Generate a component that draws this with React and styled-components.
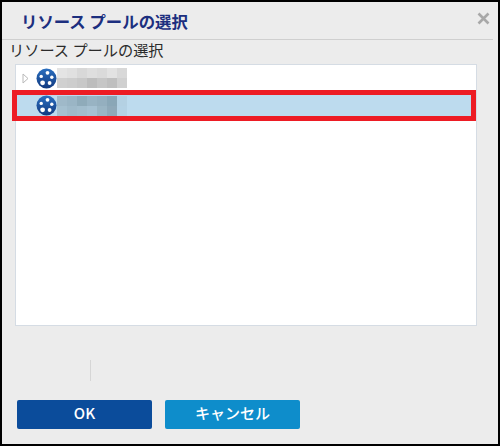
import React from 'react';
import styled, { createGlobalStyle } from 'styled-components';

const GlobalStyle = createGlobalStyle`
  html, body {
    margin: 0;
    padding: 0;
    background: #000;
  }

  body {
    font-family: "Noto Sans CJK JP", "Liberation Sans", sans-serif;
  }
`;

const Frame = styled.div`
  box-sizing: border-box;
  width: 500px;
  height: 446px;
  border: 2px solid #000;
  background: #ececec;
  display: flex;
  flex-direction: column;
`;

const TitleBar = styled.header`
  box-sizing: border-box;
  height: 38px;
  margin-right: 5px;
  padding: 0 3px 0 19px;
  display: flex;
  align-items: center;
  justify-content: space-between;
  border-bottom: 1px solid #cfcfcf;
`;

const Title = styled.h1`
  margin: 0;
  font-size: 16.4px;
  line-height: 20px;
  font-weight: 700;
  color: #1c2f7f;
`;

const CloseIcon = styled.svg`
  width: 13px;
  height: 13px;
  margin-top: -4px;
`;

const Body = styled.main`
  flex: 1;
  display: flex;
  flex-direction: column;
  padding: 0 20px 0 13px;
`;

const FieldLabel = styled.div`
  margin-left: -6px;
  font-size: 15.2px;
  line-height: 18px;
  color: #2b2b2b;
`;

const TreeBox = styled.div`
  box-sizing: border-box;
  width: 462px;
  height: 262px;
  margin-top: 6px;
  padding-top: 1px;
  background: #fff;
  border: 1px solid #d5dce4;
  display: flex;
  flex-direction: column;
`;

const TreeRow = styled.div`
  position: relative;
  display: flex;
  align-items: center;
  height: ${({ $selected }) => ($selected ? '21px' : '24px')};
  margin-top: ${({ $selected }) => ($selected ? '5px' : '0')};
  background: ${({ $selected }) => ($selected ? '#bddbee' : 'transparent')};
`;

const Expander = styled.svg`
  flex: none;
  width: 7px;
  height: 11px;
  margin-left: 6px;
  visibility: ${({ $hidden }) => ($hidden ? 'hidden' : 'visible')};
`;

const PoolIcon = styled.svg`
  flex: none;
  width: 21px;
  height: 21px;
  margin-left: 7px;
`;

const Mosaic = styled.div`
  display: grid;
  grid-template-columns: repeat(7, 10px);
  grid-auto-rows: 10px;
`;

const MosaicCell = styled.span`
  background: ${({ $tone }) => $tone};
`;

const Highlight = styled.div`
  position: absolute;
  top: -5px;
  bottom: -5px;
  left: -4px;
  right: 0;
  border: 5px solid #ed1c24;
  pointer-events: none;
`;

const Divider = styled.div`
  width: 1px;
  height: 21px;
  margin: 34px 0 0 75px;
  background: #d6d6d6;
`;

const Actions = styled.footer`
  display: flex;
  gap: 13px;
  margin: 19px 0 0 2px;
`;

const Button = styled.button`
  width: 135px;
  height: 29px;
  padding: 0 0 3px;
  border: none;
  border-radius: 2px;
  background: ${({ $primary }) => ($primary ? '#0b4c9b' : '#0e8dcb')};
  color: #fff;
  font-family: inherit;
  font-size: 15px;
  font-weight: 500;
  line-height: 20px;
`;

const plainTones = [
  '#e4e4e4', '#e0e0e0', '#d8d8d8', '#dedede', '#dadada', '#e2e2e2', '#d8d8d8',
  '#d0d0d0', '#cdcdcd', '#c8c8c8', '#bdbdbd', '#c6c6c6', '#bfbfbf', '#d0d0d0',
];

const selectedTones = [
  '#9fb9c9', '#9ab5c5', '#8fabba', '#98b3c3', '#94afbf', '#8aa7b7', '#b4d1e3',
  '#a5c0d0', '#9fbaca', '#a2bdcd', '#a6c1d2', '#9ab5c4', '#8fa9b9', '#b4d2e5',
];

const Pool = () => (
  <PoolIcon viewBox="0 0 21 21">
    <defs>
      <linearGradient id="poolFill" x1="0" y1="0" x2="0" y2="1">
        <stop offset="0" stopColor="#2a6fc0" />
        <stop offset="1" stopColor="#123a80" />
      </linearGradient>
    </defs>
    <circle cx="10.5" cy="10.5" r="10" fill="url(#poolFill)" />
    <circle cx="11.5" cy="4.8" r="1.9" fill="#fff" />
    <circle cx="15.8" cy="9.2" r="1.7" fill="#fff" />
    <circle cx="13.6" cy="15" r="1.9" fill="#fff" />
    <circle cx="6.6" cy="14.8" r="2.4" fill="#fff" />
    <circle cx="5.2" cy="8.4" r="1.7" fill="#fff" />
  </PoolIcon>
);

const Censored = ({ tones }) => (
  <Mosaic>
    {tones.map((tone, i) => (
      <MosaicCell key={i} $tone={tone} />
    ))}
  </Mosaic>
);

export default function App() {
  return (
    <>
      <GlobalStyle />
      <Frame>
        <TitleBar>
          <Title>リソース プールの選択</Title>
          <CloseIcon viewBox="0 0 13 13">
            <path d="M1.5 1.5l10 10M11.5 1.5l-10 10" stroke="#a8a8a8" strokeWidth="2.6" fill="none" />
          </CloseIcon>
        </TitleBar>
        <Body>
          <FieldLabel>リソース プールの選択</FieldLabel>
          <TreeBox>
            <TreeRow>
              <Expander viewBox="0 0 7 11">
                <path d="M1 1l5 4.5-5 4.5z" fill="#fff" stroke="#b9b9b9" />
              </Expander>
              <Pool />
              <Censored tones={plainTones} />
            </TreeRow>
            <TreeRow $selected>
              <Expander $hidden viewBox="0 0 7 11" />
              <Pool />
              <Censored tones={selectedTones} />
              <Highlight />
            </TreeRow>
          </TreeBox>
          <Divider />
          <Actions>
            <Button $primary>OK</Button>
            <Button>キャンセル</Button>
          </Actions>
        </Body>
      </Frame>
    </>
  );
}
